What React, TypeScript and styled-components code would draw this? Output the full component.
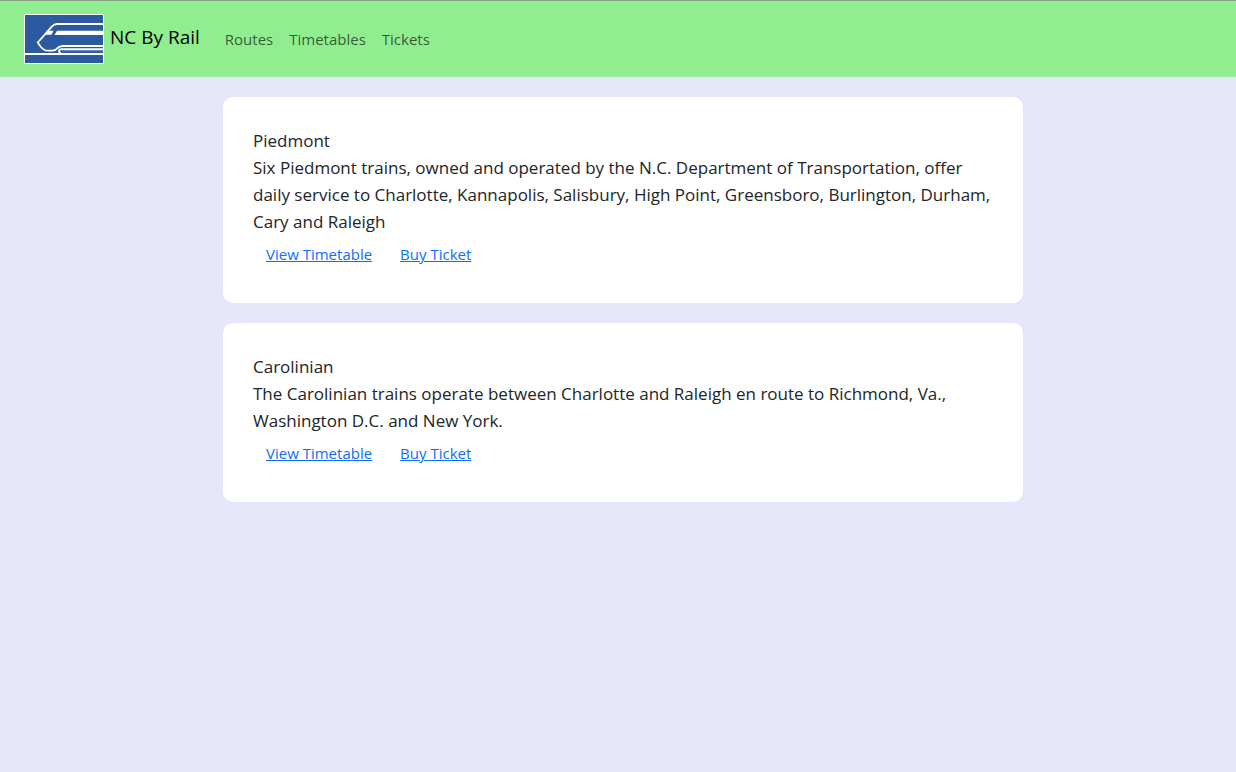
import React from "react";
import styled, { createGlobalStyle } from "styled-components";

const GlobalStyle = createGlobalStyle`
  *, *::before, *::after {
    box-sizing: border-box;
  }
  body {
    margin: 0;
    background: #e6e6fa;
    color: #212529;
    font-family: "Segoe UI", "Open Sans", "Noto Sans", sans-serif;
    font-size: 15px;
    font-weight: 400;
    line-height: 24px;
  }
`;

const Navbar = styled.nav`
  display: flex;
  align-items: center;
  padding: 8px 24px;
  border-top: 1px solid #84a088;
  background: #90ee90;
`;

const Brand = styled.a`
  display: flex;
  align-items: center;
  gap: 6px;
  padding: 5px 0;
  margin-right: 17px;
  color: #000;
  font-size: 19px;
  line-height: 30px;
  text-decoration: none;
`;

const BrandName = styled.span`
  padding-bottom: 4px;
`;

const Logo = styled.svg`
  display: block;
  width: 80px;
  height: 50px;
`;

const NavList = styled.ul`
  display: flex;
  margin: 0;
  padding: 0;
  list-style: none;
`;

const NavLink = styled.a`
  display: block;
  padding: 8px;
  color: rgba(0, 0, 0, 0.65);
  text-decoration: none;
`;

const RouteList = styled.main`
  display: flex;
  flex-direction: column;
  align-items: center;
  gap: 20px;
  padding: 20px 0 20px 10px;
`;

const RouteCard = styled.article`
  width: 100%;
  max-width: 800px;
  padding: 30px;
  border-radius: 10px;
  background: #fff;
`;

const RouteText = styled.p`
  margin: 0;
  font-size: 17px;
  line-height: 27px;
`;

const RouteActions = styled.div`
  display: flex;
  gap: 2px;
`;

const ActionLink = styled.a`
  padding: 7px 13px;
  color: #0d6efd;
  text-decoration: underline;
`;

const navItems = ["Routes", "Timetables", "Tickets"];

const routes = [
  {
    name: "Piedmont",
    description:
      "Six Piedmont trains, owned and operated by the N.C. Department of Transportation, offer daily service to Charlotte, Kannapolis, Salisbury, High Point, Greensboro, Burlington, Durham, Cary and Raleigh",
  },
  {
    name: "Carolinian",
    description:
      "The Carolinian trains operate between Charlotte and Raleigh en route to Richmond, Va., Washington D.C. and New York.",
  },
];

function TrainLogo() {
  return (
    <Logo viewBox="0 0 80 50" aria-hidden="true">
      <rect width="80" height="50" fill="#fff" />
      <rect x="1" y="1" width="78" height="48" fill="#2b5aa0" />
      <g fill="none" stroke="#fff">
        <path
          strokeWidth="1.8"
          d="M79 10H33Q30 10 28 12.3L13.8 28.5L16.5 32.5Q20 36.7 24 36.7H28Q31.5 36.7 33 34.5Q35.5 32 39 32H79"
        />
        <path strokeWidth="1.8" d="M79 35.2H38Q35 35.2 35 37.2Q35 38.7 37 38.9" />
        <path strokeWidth="1" strokeOpacity="0.35" d="M79 36.7H38" />
        <path strokeWidth="1.8" d="M1 40H79" />
      </g>
      <path fill="#fff" d="M33 16.8H79V21H30.5ZM22.5 16.8H29.5L27.5 20.7H21Z" />
    </Logo>
  );
}

export default function App() {
  return (
    <>
      <GlobalStyle />
      <Navbar>
        <Brand href="#">
          <TrainLogo />
          <BrandName>NC By Rail</BrandName>
        </Brand>
        <NavList>
          {navItems.map((item) => (
            <li key={item}>
              <NavLink href="#">{item}</NavLink>
            </li>
          ))}
        </NavList>
      </Navbar>
      <RouteList>
        {routes.map((route) => (
          <RouteCard key={route.name}>
            <RouteText>{route.name}</RouteText>
            <RouteText>{route.description}</RouteText>
            <RouteActions>
              <ActionLink href="#">View Timetable</ActionLink>
              <ActionLink href="#">Buy Ticket</ActionLink>
            </RouteActions>
          </RouteCard>
        ))}
      </RouteList>
    </>
  );
}
